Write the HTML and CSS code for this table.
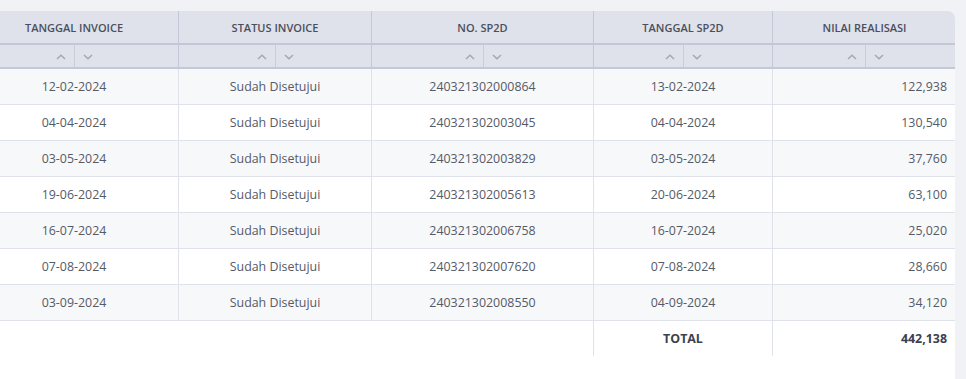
FILE: index.html
```html
<!DOCTYPE html>
<html lang="id">
<head>
<meta charset="utf-8">
<title>Realisasi</title>
<link rel="stylesheet" href="styles.css">
</head>
<body>
<div class="page">
  <div class="card">
    <table class="grid">
      <colgroup>
        <col class="c1"><col class="c2"><col class="c3"><col class="c4"><col class="c5">
      </colgroup>
      <thead>
        <tr class="head">
          <th>TANGGAL INVOICE</th>
          <th>STATUS INVOICE</th>
          <th>NO. SP2D</th>
          <th>TANGGAL SP2D</th>
          <th>NILAI REALISASI</th>
        </tr>
        <tr class="sort">
          <th><div class="sorter"><span class="up"><svg width="10" height="6" viewBox="0 0 10 6"><path d="M1 5 L5 1.2 L9 5" fill="none" stroke="#a3a8b5" stroke-width="1.5"/></svg></span><span class="dn"><svg width="10" height="6" viewBox="0 0 10 6"><path d="M1 1 L5 4.8 L9 1" fill="none" stroke="#a3a8b5" stroke-width="1.5"/></svg></span></div></th>
          <th><div class="sorter"><span class="up"><svg width="10" height="6" viewBox="0 0 10 6"><path d="M1 5 L5 1.2 L9 5" fill="none" stroke="#a3a8b5" stroke-width="1.5"/></svg></span><span class="dn"><svg width="10" height="6" viewBox="0 0 10 6"><path d="M1 1 L5 4.8 L9 1" fill="none" stroke="#a3a8b5" stroke-width="1.5"/></svg></span></div></th>
          <th><div class="sorter"><span class="up"><svg width="10" height="6" viewBox="0 0 10 6"><path d="M1 5 L5 1.2 L9 5" fill="none" stroke="#a3a8b5" stroke-width="1.5"/></svg></span><span class="dn"><svg width="10" height="6" viewBox="0 0 10 6"><path d="M1 1 L5 4.8 L9 1" fill="none" stroke="#a3a8b5" stroke-width="1.5"/></svg></span></div></th>
          <th><div class="sorter"><span class="up"><svg width="10" height="6" viewBox="0 0 10 6"><path d="M1 5 L5 1.2 L9 5" fill="none" stroke="#a3a8b5" stroke-width="1.5"/></svg></span><span class="dn"><svg width="10" height="6" viewBox="0 0 10 6"><path d="M1 1 L5 4.8 L9 1" fill="none" stroke="#a3a8b5" stroke-width="1.5"/></svg></span></div></th>
          <th><div class="sorter"><span class="up"><svg width="10" height="6" viewBox="0 0 10 6"><path d="M1 5 L5 1.2 L9 5" fill="none" stroke="#a3a8b5" stroke-width="1.5"/></svg></span><span class="dn"><svg width="10" height="6" viewBox="0 0 10 6"><path d="M1 1 L5 4.8 L9 1" fill="none" stroke="#a3a8b5" stroke-width="1.5"/></svg></span></div></th>
        </tr>
      </thead>
      <tbody>
        <tr><td>12-02-2024</td><td>Sudah Disetujui</td><td>240321302000864</td><td>13-02-2024</td><td class="num">122,938</td></tr>
        <tr><td>04-04-2024</td><td>Sudah Disetujui</td><td>240321302003045</td><td>04-04-2024</td><td class="num">130,540</td></tr>
        <tr><td>03-05-2024</td><td>Sudah Disetujui</td><td>240321302003829</td><td>03-05-2024</td><td class="num">37,760</td></tr>
        <tr><td>19-06-2024</td><td>Sudah Disetujui</td><td>240321302005613</td><td>20-06-2024</td><td class="num">63,100</td></tr>
        <tr><td>16-07-2024</td><td>Sudah Disetujui</td><td>240321302006758</td><td>16-07-2024</td><td class="num">25,020</td></tr>
        <tr><td>07-08-2024</td><td>Sudah Disetujui</td><td>240321302007620</td><td>07-08-2024</td><td class="num">28,660</td></tr>
        <tr><td>03-09-2024</td><td>Sudah Disetujui</td><td>240321302008550</td><td>04-09-2024</td><td class="num">34,120</td></tr>
      </tbody>
      <tfoot>
        <tr class="total"><td class="blank"></td><td class="blank"></td><td class="blank"></td><td class="lbl">TOTAL</td><td class="num">442,138</td></tr>
      </tfoot>
    </table>
  </div>
</div>
</body>
</html>
```

FILE: styles.css
```css
html, body {
  margin: 0;
  padding: 0;
  background: #f1f2f6;
}
.page {
  padding-top: 11px;
  height: 368px;
  overflow: hidden;
}
.card {
  width: 955px;
  height: 368px;
  background: #ffffff;
  border-top-right-radius: 7px;
  overflow: hidden;
}
.grid {
  margin-left: -30px;
  border-collapse: separate;
  border-spacing: 0;
  table-layout: fixed;
  width: 986px;
  font-family: "Open Sans", "Noto Sans", sans-serif;
}
.c1 { width: 209px; }
.c2 { width: 193px; }
.c3 { width: 222px; }
.c4 { width: 179px; }
.c5 { width: 183px; }

.grid th, .grid td {
  padding: 0;
  box-sizing: border-box;
}
.head th {
  height: 34px;
  background: #dfe2ea;
  color: #4a4f5d;
  font-size: 11px;
  font-weight: 600;
  text-align: center;
  border-right: 1px solid #c3c8d6;
  border-bottom: 2px solid #c3c8d6;
}
.sort th {
  height: 24px;
  background: #dfe2ea;
  border-right: 1px solid #c3c8d6;
  border-bottom: 2px solid #c3c8d6;
}
.grid tr > :last-child { border-right: none; }
.sorter {
  display: flex;
  justify-content: center;
  height: 22px;
}
.sorter span {
  width: 26px;
  display: flex;
  align-items: center;
  justify-content: center;
}
.sorter .up {
  border-right: 1px solid #c9cdd8;
  padding-left: 1px;
}
.sorter svg { margin-top: 1px; }

tbody td {
  height: 36px;
  font-size: 12.4px;
  color: #555a67;
  text-align: center;
  border-right: 1px solid #dfe2ea;
  border-bottom: 1px solid #dfe2ea;
}
tbody tr:nth-child(odd) td { background: #f7f8fa; }
tbody tr:nth-child(even) td { background: #ffffff; }
.grid td.num {
  text-align: right;
  padding-right: 9px;
}
.total td {
  height: 35px;
  font-size: 12.4px;
  font-weight: 700;
  color: #3c4150;
  text-align: center;
  border-right: 1px solid #dfe2ea;
}
.total td.blank { border-right: none; }
.total td.blank:nth-child(3) { border-right: 1px solid #dfe2ea; }
```
